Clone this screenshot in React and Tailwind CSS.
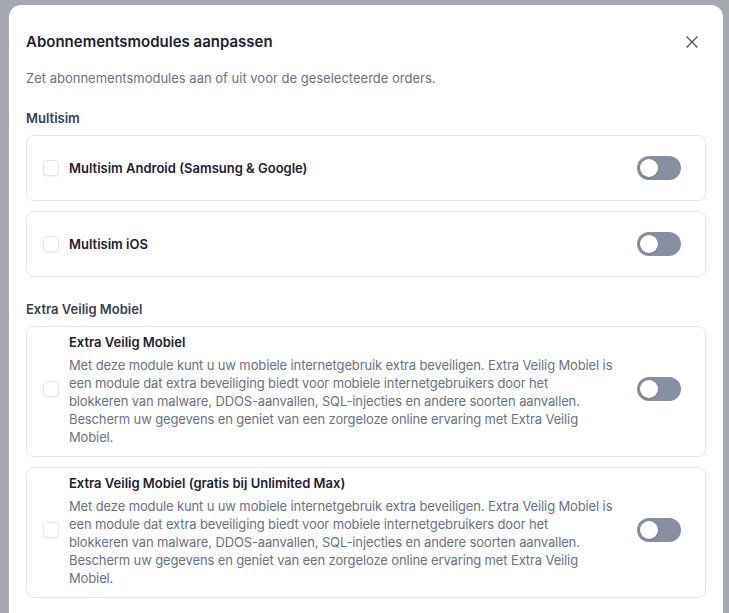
import React, { useState } from "react";

// wrapped the same way as the original dialog
const descLines = [
  "Met deze module kunt u uw mobiele internetgebruik extra beveiligen. Extra Veilig Mobiel is",
  "een module dat extra beveiliging biedt voor mobiele internetgebruikers door het",
  "blokkeren van malware, DDOS-aanvallen, SQL-injecties en andere soorten aanvallen.",
  "Bescherm uw gegevens en geniet van een zorgeloze online ervaring met Extra Veilig",
  "Mobiel.",
];

const groups = [
  {
    label: "Multisim",
    modules: [
      { id: "android", name: "Multisim Android (Samsung & Google)" },
      { id: "ios", name: "Multisim iOS" },
    ],
  },
  {
    label: "Extra Veilig Mobiel",
    modules: [
      { id: "evm", name: "Extra Veilig Mobiel", description: descLines },
      { id: "evm-max", name: "Extra Veilig Mobiel (gratis bij Unlimited Max)", description: descLines },
    ],
  },
];

const Toggle = ({ on, onClick }) => (
  <button
    onClick={onClick}
    className={`flex h-6 w-11 shrink-0 items-center rounded-full px-[3px] ${
      on ? "justify-end bg-[#4867D6]" : "justify-start bg-[#878fa0]"
    }`}
  >
    <span className="h-[18px] w-[18px] rounded-full bg-white shadow-sm" />
  </button>
);

const ModuleCard = ({ module, checked, on, onCheck, onToggle }) => (
  <div
    className={`flex items-center rounded-lg border border-[#e5e7eb] pl-4 pr-6 ${
      module.description ? "pt-[5px] pb-[10px]" : "h-[66px]"
    }`}
  >
    <button
      onClick={onCheck}
      className="h-4 w-4 shrink-0 rounded-[4px] border border-[#e5e7eb] bg-white shadow-[0_1px_2px_rgba(0,0,0,0.06)]"
    >
      {checked && <span className="block h-full w-full rounded-[3px] bg-[#4867D6]" />}
    </button>
    <div className="ml-[10px] mr-5 flex-1">
      <div className="text-[13px] font-semibold leading-5 text-[#1e2130]">{module.name}</div>
      {module.description && (
        <p className="mt-1 text-[13px] leading-[18px] tracking-[-0.01em] text-[#6b7280]">
          {module.description.map((line, i) => (
            <React.Fragment key={i}>
              {line}
              {i < module.description.length - 1 && <br />}
            </React.Fragment>
          ))}
        </p>
      )}
    </div>
    <Toggle on={on} onClick={onToggle} />
  </div>
);

const App = () => {
  const [checked, setChecked] = useState({});
  const [enabled, setEnabled] = useState({});

  return (
    <div
      className="h-[613px] overflow-hidden bg-[#a5a8af] pl-[9px] pr-[6px] pt-[5px]"
      style={{ fontFamily: "Inter, 'Noto Sans', sans-serif" }}
    >
      <div className="min-h-[700px] rounded-t-xl bg-white px-[17px] pt-[26px]">
        <header className="flex items-center justify-between">
          <h1 className="text-[15px] font-semibold leading-[22px] text-[#1e2130]">
            Abonnementsmodules aanpassen
          </h1>
          <button className="mr-[7px] text-[#4b5563]">
            <svg width="14" height="14" viewBox="0 0 14 14" fill="none" stroke="currentColor" strokeWidth="1.3">
              <path d="M1.5 1.5l11 11M12.5 1.5l-11 11" />
            </svg>
          </button>
        </header>
        <p className="mt-[15px] text-[13px] leading-5 text-[#6b7280]">
          Zet abonnementsmodules aan of uit voor de geselecteerde orders.
        </p>

        {groups.map((group, i) => (
          <section key={group.label} className={i === 0 ? "mt-5" : "mt-[22px]"}>
            <h2 className="mb-[7px] text-[13px] font-semibold leading-5 text-[#374151]">
              {group.label}
            </h2>
            <div className="flex flex-col gap-[10px]">
              {group.modules.map((m) => (
                <ModuleCard
                  key={m.id}
                  module={m}
                  checked={checked[m.id]}
                  on={enabled[m.id]}
                  onCheck={() => setChecked({ ...checked, [m.id]: !checked[m.id] })}
                  onToggle={() => setEnabled({ ...enabled, [m.id]: !enabled[m.id] })}
                />
              ))}
            </div>
          </section>
        ))}
      </div>
    </div>
  );
};

export default App;
